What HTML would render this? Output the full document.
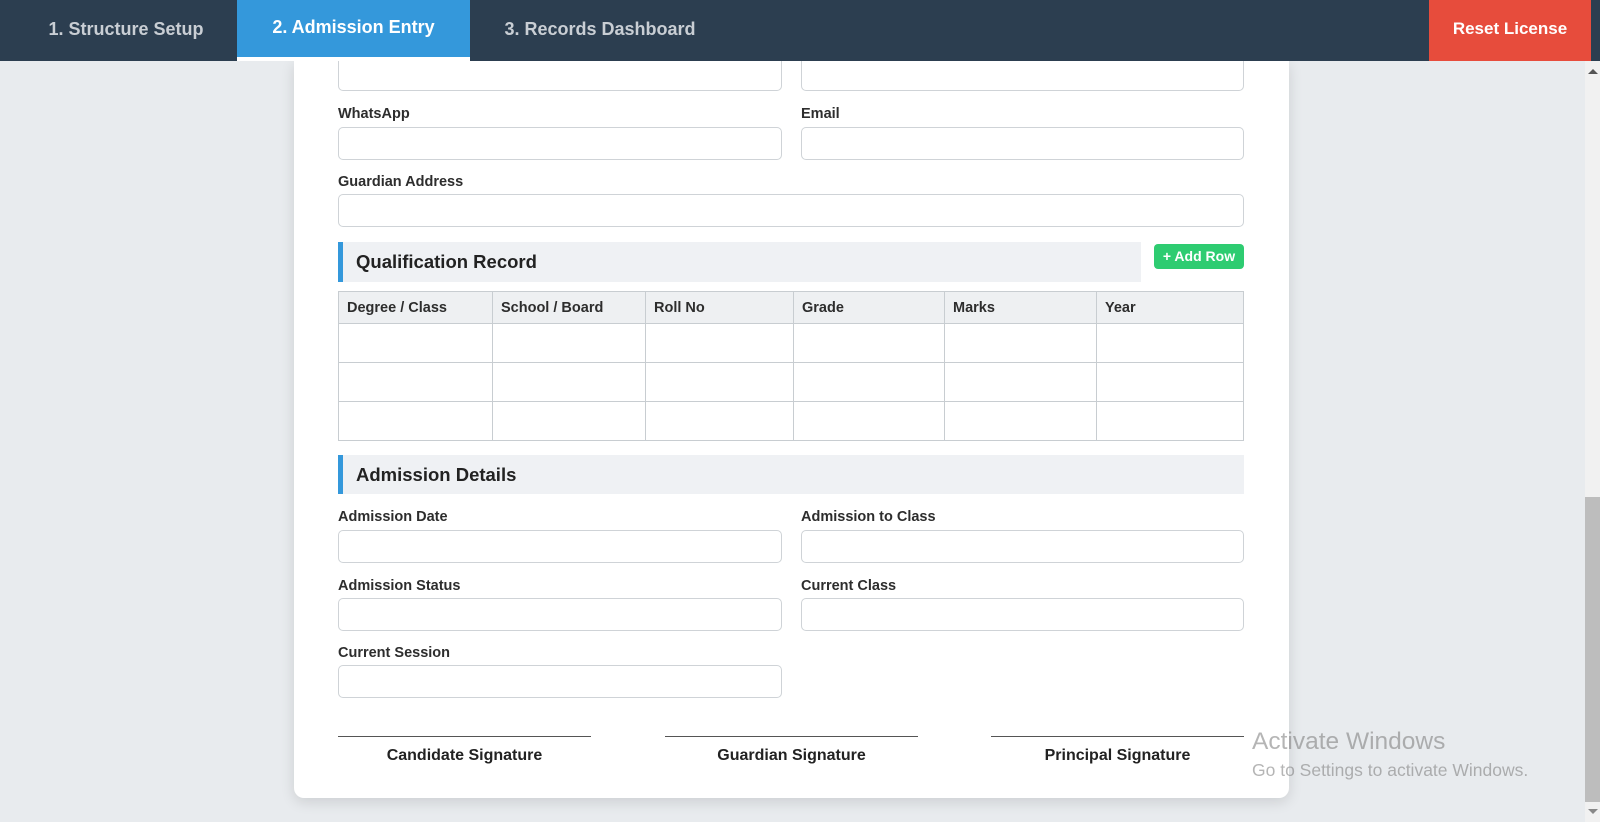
<!DOCTYPE html>
<html><head><meta charset="utf-8"><style>
*{box-sizing:border-box;margin:0;padding:0}
body{width:1600px;height:822px;overflow:hidden;background:#e8ebee;font-family:"Liberation Sans",sans-serif;position:relative}
.hdr{position:absolute;left:0;top:0;width:1600px;height:61px;background:#2c3e50;z-index:5}
.tab{position:absolute;top:0;height:61px;line-height:58px;color:#c9ced4;font-weight:bold;font-size:18px;text-align:center}
.card{position:absolute;left:294px;top:61px;width:995px;height:737px;background:#fff;border-radius:0 0 10px 10px;box-shadow:0 4px 14px rgba(0,0,0,.12)}
.a{position:absolute}
.lbl{position:absolute;font-size:14.5px;font-weight:bold;color:#2d2d2d}
.inp{position:absolute;height:33px;border:1px solid #cfd3d7;border-radius:5px;background:#fff}
.sec{position:absolute;background:#eff1f4;border-left:5px solid #3498db;font-size:18.5px;font-weight:bold;color:#222;padding-left:13px}
table{position:absolute;left:338px;top:291px;width:906px;border-collapse:collapse}
td,th{border:1px solid #c8cdd1;text-align:left}
th{height:32px;background:#eef0f2;font-size:14.5px;font-weight:bold;color:#2d2d2d;padding-left:8px}
td{height:39px}
.sig{position:absolute;top:736px;width:253px;border-top:1.5px solid #555;text-align:center;font-size:16px;font-weight:bold;color:#222;padding-top:10px}
</style></head><body>
<div class="hdr">
<div class="tab" style="left:0;width:252px">1. Structure Setup</div>
<div class="tab" style="left:237px;width:233px;background:#3498db;color:#fff;border-bottom:4px solid #fff;line-height:54px">2. Admission Entry</div>
<div class="tab" style="left:470px;width:260px">3. Records Dashboard</div>
<div class="tab" style="left:1429px;width:162px;background:#e74c3c;color:#fff;font-size:17px">Reset License</div>
</div>
<div class="card"></div>
<div class="inp" style="left:338px;top:58px;width:444px;border-top:none;border-radius:0 0 5px 5px"></div>
<div class="inp" style="left:801px;top:58px;width:443px;border-top:none;border-radius:0 0 5px 5px"></div>
<div class="lbl" style="left:338px;top:106px">WhatsApp</div>
<div class="lbl" style="left:801px;top:106px">Email</div>
<div class="inp" style="left:338px;top:127px;width:444px"></div>
<div class="inp" style="left:801px;top:127px;width:443px"></div>
<div class="lbl" style="left:338px;top:174px">Guardian Address</div>
<div class="inp" style="left:338px;top:194px;width:906px"></div>
<div class="sec" style="left:338px;top:242px;width:803px;height:40px;line-height:40px">Qualification Record</div>
<div class="a" style="left:1154px;top:244px;width:90px;height:25px;background:#2ecc71;color:#fff;border-radius:4px;font-size:14px;font-weight:bold;text-align:center;line-height:25px">+ Add Row</div>
<table>
<tr><th style="width:154px">Degree / Class</th><th style="width:153px">School / Board</th><th style="width:148px">Roll No</th><th style="width:151px">Grade</th><th style="width:152px">Marks</th><th>Year</th></tr>
<tr><td></td><td></td><td></td><td></td><td></td><td></td></tr>
<tr><td></td><td></td><td></td><td></td><td></td><td></td></tr>
<tr><td></td><td></td><td></td><td></td><td></td><td></td></tr>
</table>
<div class="sec" style="left:338px;top:455px;width:906px;height:39px;line-height:39px">Admission Details</div>
<div class="lbl" style="left:338px;top:509px">Admission Date</div>
<div class="lbl" style="left:801px;top:509px">Admission to Class</div>
<div class="inp" style="left:338px;top:530px;width:444px"></div>
<div class="inp" style="left:801px;top:530px;width:443px"></div>
<div class="lbl" style="left:338px;top:578px">Admission Status</div>
<div class="lbl" style="left:801px;top:578px">Current Class</div>
<div class="inp" style="left:338px;top:598px;width:444px"></div>
<div class="inp" style="left:801px;top:598px;width:443px"></div>
<div class="lbl" style="left:338px;top:645px">Current Session</div>
<div class="inp" style="left:338px;top:665px;width:444px"></div>
<div class="sig" style="left:338px">Candidate Signature</div>
<div class="sig" style="left:665px">Guardian Signature</div>
<div class="sig" style="left:991px">Principal Signature</div>
<div class="a" style="left:1252px;top:728px;font-size:24.5px;color:rgba(120,120,120,.55)">Activate Windows</div>
<div class="a" style="left:1252px;top:760px;font-size:17.5px;color:rgba(120,120,120,.55)">Go to Settings to activate Windows.</div>
<div class="a" style="left:1585px;top:61px;width:15px;height:761px;background:#f1f1f1"></div>
<div class="a" style="left:1585px;top:497px;width:15px;height:305px;background:#bdbdbd"></div>
<div class="a" style="left:1588px;top:69px;width:0;height:0;border-left:5px solid transparent;border-right:5px solid transparent;border-bottom:5px solid #555"></div>
<div class="a" style="left:1588px;top:809px;width:0;height:0;border-left:5px solid transparent;border-right:5px solid transparent;border-top:5px solid #888"></div>
</body></html>
